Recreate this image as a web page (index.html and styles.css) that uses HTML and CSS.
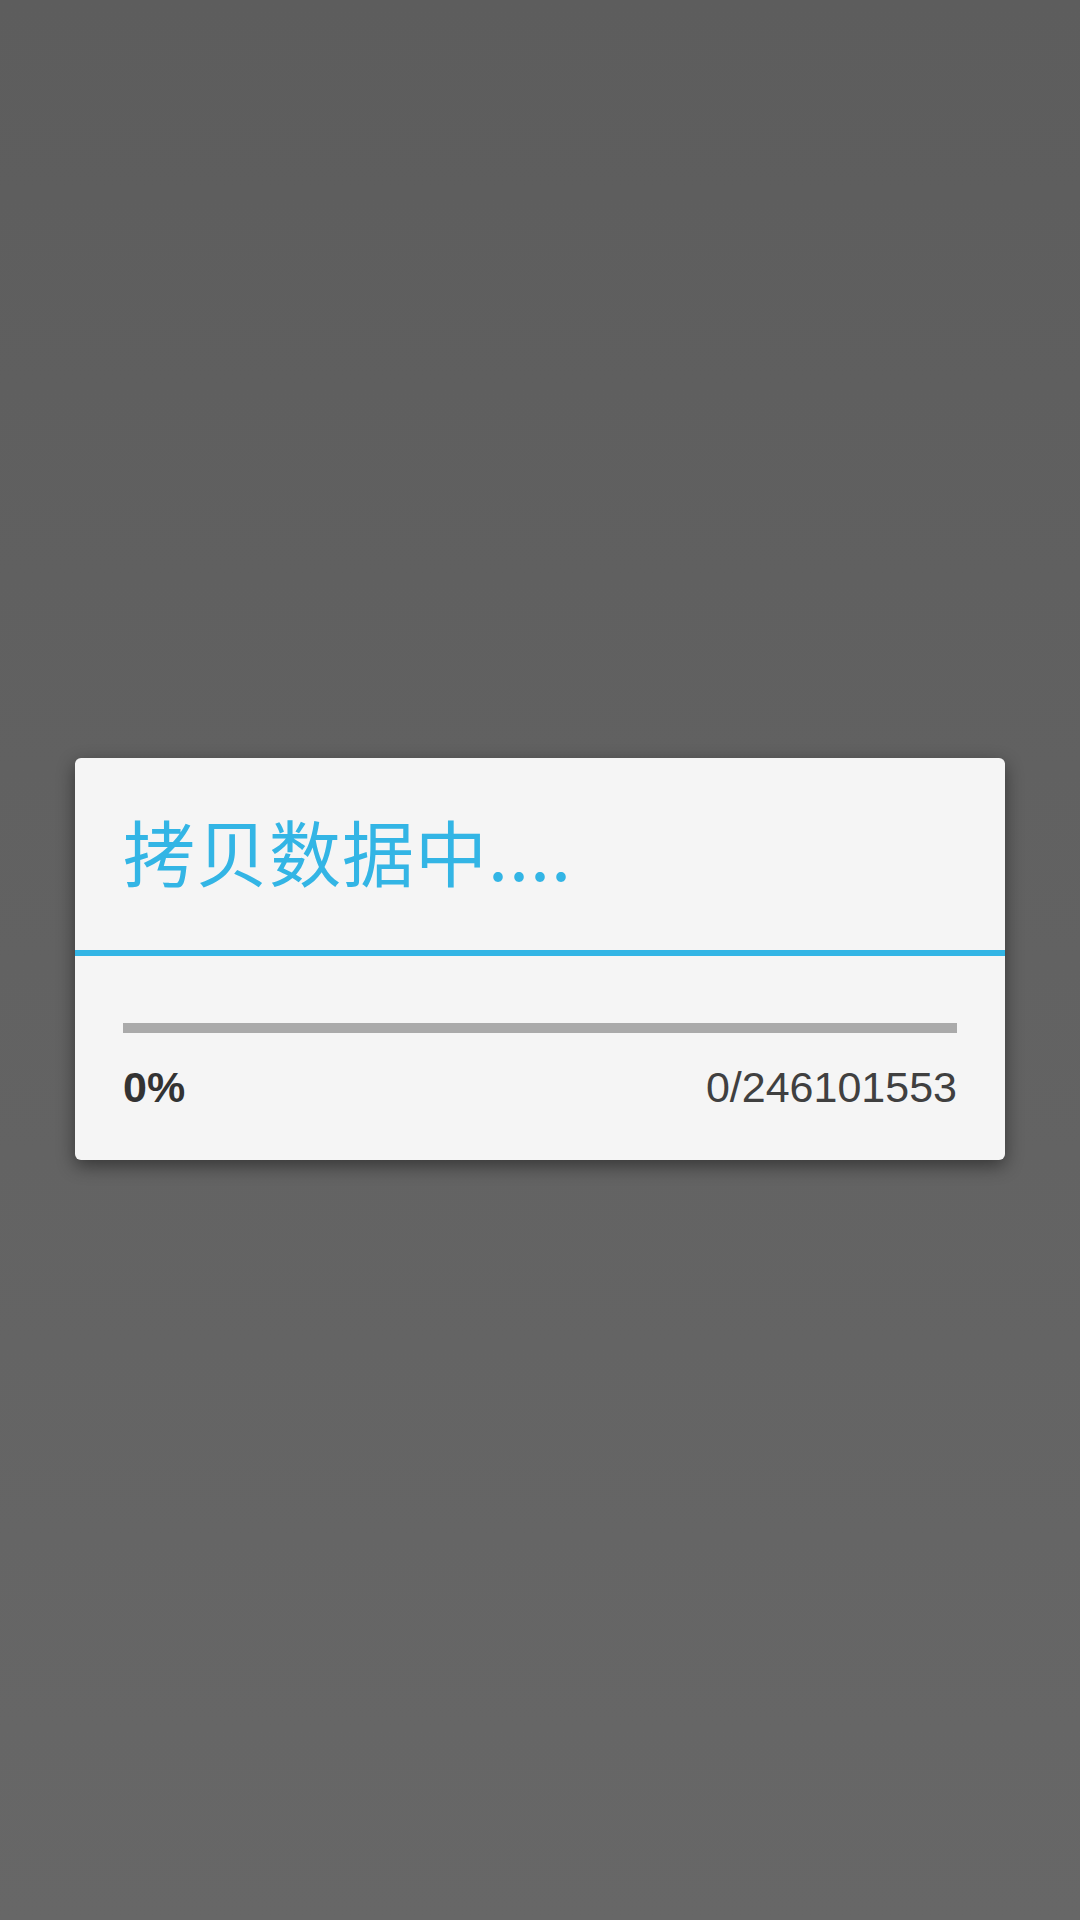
FILE: index.html
```html
<!DOCTYPE html>
<html>
<head>
<meta charset="utf-8">
<link rel="stylesheet" href="styles.css">
</head>
<body>
<div class="screen">
  <div class="dialog">
    <div class="title">拷贝数据中....</div>
    <div class="divider"></div>
    <div class="body">
      <div class="bar"></div>
      <div class="row">
        <span class="percent">0%</span>
        <span class="count">0/246101553</span>
      </div>
    </div>
  </div>
</div>
</body>
</html>
```

FILE: styles.css
```css
html, body {
  margin: 0;
  padding: 0;
}
body {
  width: 1080px;
  height: 1920px;
  background: linear-gradient(to bottom, #5d5d5d, #676767);
  font-family: "Liberation Sans", Arial, sans-serif;
}
.screen {
  display: flex;
  justify-content: center;
  padding-top: 758px;
}
.dialog {
  width: 930px;
  background: #f5f5f5;
  border-radius: 6px;
  box-shadow: 0 6px 18px rgba(0, 0, 0, 0.45);
  overflow: hidden;
}
.title {
  height: 184px;
  padding: 0 48px 8px 48px;
  display: flex;
  align-items: center;
  font-family: "Noto Sans CJK SC", "Noto Sans", sans-serif;
  font-size: 72px;
  line-height: 1.2;
  letter-spacing: 1px;
  color: #33b5e5;
}
.divider {
  height: 6px;
  background: #33b5e5;
}
.body {
  padding: 67px 48px 48px 48px;
}
.bar {
  height: 10px;
  background: #aaaaaa;
}
.row {
  display: flex;
  justify-content: space-between;
  margin-top: 29px;
  font-size: 43px;
  line-height: 50px;
  color: #333333;
}
.percent {
  font-weight: bold;
}
.count {
  font-weight: normal;
  color: #404040;
}
```
